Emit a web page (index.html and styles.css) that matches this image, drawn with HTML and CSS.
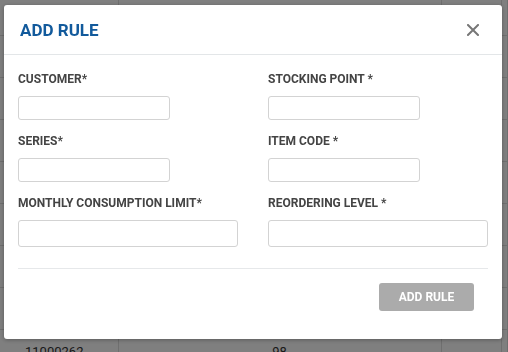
FILE: index.html
```html
<!DOCTYPE html>
<html lang="en">
<head>
  <meta charset="UTF-8">
  <title>Add Rule</title>
  <link rel="stylesheet" href="styles.css">
</head>
<body>

<!-- Page behind the dialog -->
<table class="rules-table">
  <tr><td></td><td></td><td></td><td></td></tr>
  <tr><td></td><td></td><td></td><td></td></tr>
  <tr><td></td><td></td><td></td><td></td></tr>
  <tr><td></td><td></td><td></td><td></td></tr>
  <tr><td></td><td></td><td></td><td></td></tr>
  <tr><td></td><td></td><td></td><td></td></tr>
  <tr><td></td><td></td><td></td><td></td></tr>
  <tr><td></td><td></td><td></td><td></td></tr>
  <tr><td>11000262</td><td>98</td><td></td><td></td></tr>
</table>

<!-- Add Rule Dialog -->
<div class="backdrop">
  <div class="modal">
    <div class="modal-header">
      <h2>ADD RULE</h2>
      <button class="close-btn" aria-label="Close">
        <svg width="12" height="12" viewBox="0 0 12 12">
          <path d="M1 1 L11 11 M11 1 L1 11" stroke="#777" stroke-width="2" stroke-linecap="square"/>
        </svg>
      </button>
    </div>

    <div class="modal-body">
      <div class="field">
        <label>CUSTOMER*</label>
        <input type="text" class="short">
      </div>
      <div class="field">
        <label>STOCKING POINT *</label>
        <input type="text" class="short">
      </div>
      <div class="field">
        <label>SERIES*</label>
        <input type="text" class="short">
      </div>
      <div class="field">
        <label>ITEM CODE *</label>
        <input type="text" class="short">
      </div>
      <div class="field">
        <label>MONTHLY CONSUMPTION LIMIT*</label>
        <input type="text" class="wide">
      </div>
      <div class="field">
        <label>REORDERING LEVEL *</label>
        <input type="text" class="wide">
      </div>
    </div>

    <div class="modal-footer">
      <button class="submit-btn" disabled>ADD RULE</button>
    </div>
  </div>
</div>

</body>
</html>
```

FILE: styles.css
```css
body {
  font-family: Roboto, "Liberation Sans", sans-serif;
  margin: 0;
  padding: 0;
  background: #fff;
  overflow: hidden;
}
.rules-table {
  border-collapse: collapse;
  table-layout: fixed;
  width: 100%;
  margin-top: -7px;
}
.rules-table td {
  height: 42px;
  border-bottom: 1px solid #dedede;
  border-right: 1px solid #dedede;
  padding: 14px 0 0 25px;
  font-size: 13px;
  line-height: 15px;
  color: #333;
  vertical-align: top;
  box-sizing: border-box;
}
.rules-table td:nth-child(1) { width: 118px; }
.rules-table td:nth-child(2) { width: 323px; padding-left: 0; text-align: center; }
.rules-table td:nth-child(3) { width: 60px; }
.backdrop {
  position: fixed;
  inset: 0;
  background: rgba(0, 0, 0, 0.5);
  padding: 5px 6px 0 4px;
}
.modal {
  background: #fff;
  border-radius: 3px;
  width: 498px;
  height: 334px;
  box-shadow: 0 1px 4px rgba(0, 0, 0, 0.3);
}
.modal-header {
  display: flex;
  align-items: center;
  justify-content: space-between;
  height: 49px;
  padding: 0 23px 0 16px;
  border-bottom: 1px solid #e3e6e8;
}
.modal-header h2 {
  margin: 0;
  font-size: 17px;
  font-weight: 700;
  color: #125a9c;
}
.close-btn {
  border: none;
  background: none;
  padding: 0;
  width: 12px;
  height: 12px;
  display: flex;
  cursor: pointer;
}
.modal-body {
  display: grid;
  grid-template-columns: 220px 220px;
  column-gap: 30px;
  row-gap: 14px;
  padding: 17px 14px 0;
}
.field label {
  display: block;
  font-size: 12px;
  line-height: 14px;
  font-weight: 700;
  color: #444;
  margin-bottom: 10px;
}
.field input {
  display: block;
  box-sizing: border-box;
  border: 1px solid #d3d3d3;
  border-radius: 3px;
  padding: 0 8px;
  margin: 0;
}
.field input.short {
  width: 152px;
  height: 24px;
}
.field input.wide {
  width: 220px;
  height: 27px;
}
.modal-footer {
  margin: 21px 14px 0;
  border-top: 1px solid #e6e8ea;
  padding-top: 14px;
  display: flex;
  justify-content: flex-end;
}
.submit-btn {
  width: 95px;
  height: 28px;
  margin-right: 14px;
  border: none;
  border-radius: 3px;
  background: #ababab;
  color: #fff;
  font-family: Roboto, "Liberation Sans", sans-serif;
  font-size: 12px;
  font-weight: 700;
}
```
